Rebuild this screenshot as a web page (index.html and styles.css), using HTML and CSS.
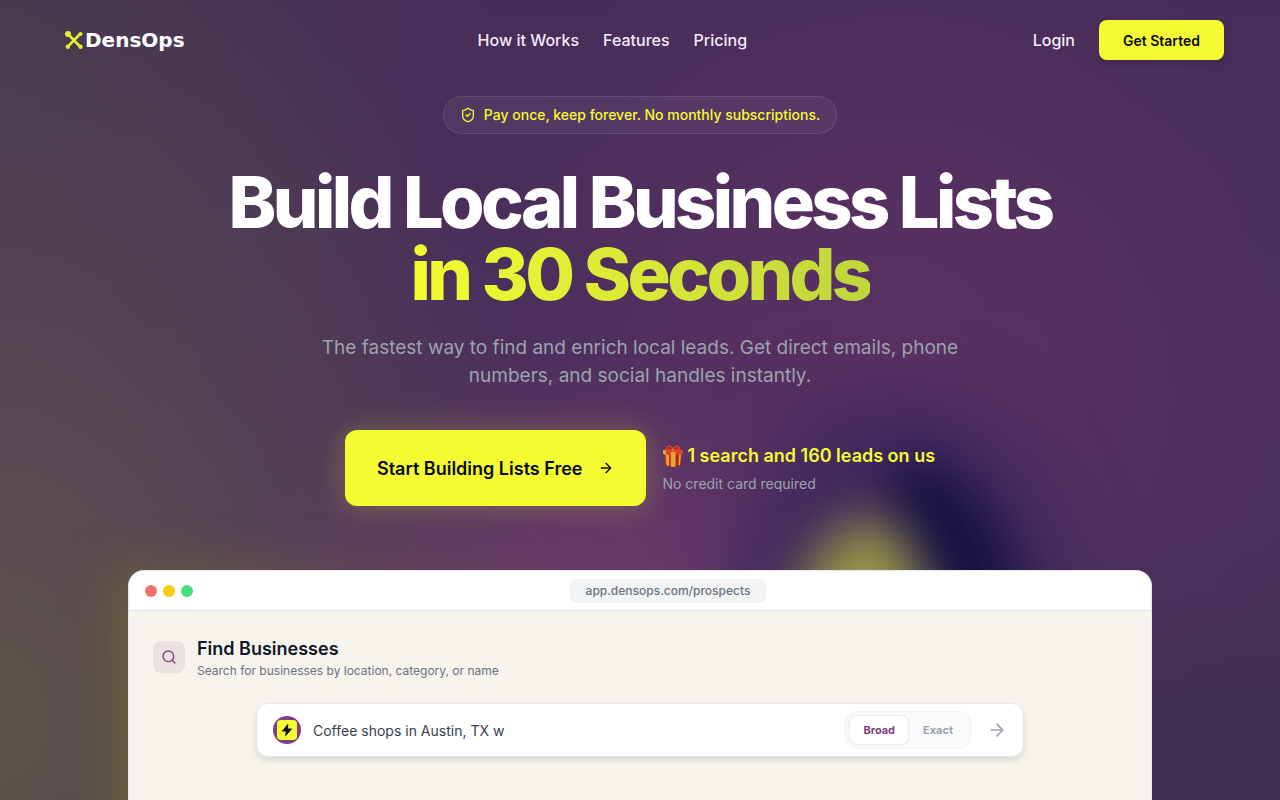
FILE: index.html
```html
<!DOCTYPE html>
<html lang="en">
<head>
    <meta charset="UTF-8">
    <meta name="viewport" content="width=device-width, initial-scale=1.0">
    <title>DensOps - Build Local Business Lists</title>
    <link rel="stylesheet" href="styles.css">
</head>
<body>
    <div class="backdrop">
        <div class="glow glow-edge"></div>
        <div class="glow glow-haze"></div>
        <div class="glow glow-navy"></div>
        <div class="glow glow-yellow"></div>
    </div>

    <header class="navbar">
        <a class="logo" href="#">
            <svg width="20" height="20" viewBox="0 0 20 20" fill="#e3f032" stroke="#e3f032">
                <path d="M4 4 16 16.500M16 4 4 16.500" stroke-width="2.600" fill="none"/>
                <circle cx="4" cy="4" r="3" stroke="none"/>
                <circle cx="16.500" cy="4" r="2" stroke="none"/>
                <circle cx="3.800" cy="16.800" r="2.200" stroke="none"/>
                <circle cx="16.500" cy="16.800" r="2.200" stroke="none"/>
            </svg>
            <span>DensOps</span>
        </a>
        <nav class="nav-links">
            <a href="#how">How it Works</a>
            <a href="#features">Features</a>
            <a href="#pricing">Pricing</a>
        </nav>
        <div class="nav-actions">
            <a href="#login">Login</a>
            <button class="btn-start" type="button">Get Started</button>
        </div>
    </header>

    <main>
        <section class="hero">
            <div class="pill">
                <svg width="16" height="16" viewBox="0 0 24 24" fill="none" stroke="currentColor" stroke-width="2" stroke-linecap="round" stroke-linejoin="round">
                    <path d="M20 13c0 5-3.500 7.500-7.660 8.950a1 1 0 0 1-.67-.01C7.500 20.500 4 18 4 13V6a1 1 0 0 1 1-1c2 0 4.500-1.200 6.240-2.720a1.170 1.170 0 0 1 1.520 0C14.510 3.810 17 5 19 5a1 1 0 0 1 1 1z"/>
                    <path d="m9 12 2 2 4-4"/>
                </svg>
                <span>Pay once, keep forever. No monthly subscriptions.</span>
            </div>

            <h1>Build Local Business Lists<br><span class="accent">in 30 Seconds</span></h1>

            <p class="lead">The fastest way to find and enrich local leads. Get direct emails, phone numbers, and social handles instantly.</p>

            <div class="cta">
                <button class="btn-cta" type="button">
                    <span>Start Building Lists Free</span>
                    <svg width="16" height="16" viewBox="0 0 24 24" fill="none" stroke="currentColor" stroke-width="2" stroke-linecap="round" stroke-linejoin="round">
                        <path d="M5 12h14M12 5l7 7-7 7"/>
                    </svg>
                </button>
                <div class="offer">
                    <p class="offer-title">
                        <svg width="22" height="22" viewBox="0 0 22 22">
                            <path d="M2 7h18l-1.500 13L11 22l-7.500-2z" fill="#c8391f"/>
                            <path d="M11 8h9l-1.500 12L11 22z" fill="#a92a18"/>
                            <path d="M1 5 11 2.500 21 5v4l-10 2L1 9z" fill="#d9442a"/>
                            <path d="M1 5.500 4 4.700v5l-3-.7zM4 9.500 7 10v11l-2.500-.7zM9 7h4.500v14.500L11 22l-2-.5zM17 9.800l2-.4-1 10.700-1.500.4z" fill="#e7a63a"/>
                            <path d="M11 5C7 6 4 4 5 2s5-1 6 3zM11 5c4 1 7-1 6-3s-5-1-6 3z" fill="#b9261c" stroke="#ef5b3c"/>
                            <circle cx="11" cy="5" r="1.500" fill="#f0633f"/>
                        </svg>
                        <span>1 search and 160 leads on us</span>
                    </p>
                    <p class="offer-note">No credit card required</p>
                </div>
            </div>
        </section>

        <section class="browser">
            <div class="browser-bar">
                <div class="dots">
                    <span class="dot red"></span>
                    <span class="dot yellow"></span>
                    <span class="dot green"></span>
                </div>
                <div class="address"><span>app.densops.com/prospects</span></div>
            </div>
            <div class="browser-body">
                <div class="panel-head">
                    <div class="panel-icon">
                        <svg width="16" height="16" viewBox="0 0 24 24" fill="none" stroke="currentColor" stroke-width="2" stroke-linecap="round">
                            <circle cx="11" cy="11" r="8"/>
                            <path d="m21 21-4.300-4.300"/>
                        </svg>
                    </div>
                    <div>
                        <h2>Find Businesses</h2>
                        <p>Search for businesses by location, category, or name</p>
                    </div>
                </div>
                <form class="search">
                    <div class="bolt">
                        <div class="bolt-inner">
                            <svg width="12" height="12" viewBox="0 0 24 24" fill="#111111">
                                <path d="M13.500 1 3 14h7.500L9.500 23 21 10h-8z" stroke="#111111" stroke-width="2" stroke-linejoin="round"/>
                            </svg>
                        </div>
                    </div>
                    <input type="text" aria-label="Search businesses" value="Coffee shops in Austin, TX w">
                    <div class="toggle">
                        <button class="active" type="button">Broad</button>
                        <button type="button">Exact</button>
                    </div>
                    <button class="go" type="submit" aria-label="Search">
                        <svg width="20" height="20" viewBox="0 0 24 24" fill="none" stroke="currentColor" stroke-width="2" stroke-linecap="round" stroke-linejoin="round">
                            <path d="M5 12h14M12 5l7 7-7 7"/>
                        </svg>
                    </button>
                </form>
            </div>
        </section>
    </main>
</body>
</html>
```
FILE: styles.css
```css
*{
    margin: 0;
    padding: 0;
    box-sizing: border-box;
}

body{
    display: flex;
    flex-direction: column;
    min-height: 100vh;
    font-family: Inter, "Liberation Sans", sans-serif;
    font-size: 16px;
    line-height: 24px;
    color: white;
    background: #472d57;
}

a{
    color: inherit;
    text-decoration: none;
}

button,input{
    font-family: inherit;
    border: none;
    background: none;
}

button{
    cursor: pointer;
}

svg{
    display: block;
    flex-shrink: 0;
}

/* background glows */
.backdrop{
    position: absolute;
    inset: 0;
    z-index: -1;
    overflow: hidden;
    background:
        radial-gradient(ellipse 28% 32% at 46% 76%, rgba(122, 66, 114, 0.7), transparent),
        radial-gradient(ellipse 36% 55% at 70% 44%, rgba(98, 50, 103, 0.7), transparent),
        radial-gradient(ellipse 45% 110% at 0% 90%, rgba(98, 88, 76, 0.9), transparent),
        radial-gradient(ellipse 38% 60% at 0% 0%, rgba(66, 54, 78, 0.8), transparent),
        linear-gradient(180deg, #482d59 0%, #4b2f5b 65%, #3d3050 100%);
}

.glow{
    position: absolute;
}

.glow-edge{
    left: 9%;
    top: 71%;
    width: 40%;
    height: 50%;
    background: linear-gradient(90deg, rgba(114, 108, 50, 0.7), rgba(122, 90, 70, 0.4) 40%, transparent);
    filter: blur(24px);
}

.glow-haze{
    left: 57%;
    top: 50%;
    width: 26%;
    height: 50%;
    border-radius: 50%;
    background: rgba(48, 34, 88, 0.6);
    filter: blur(40px);
}

.glow-navy{
    left: 71%;
    top: 56%;
    width: 7%;
    height: 24%;
    border-radius: 50%;
    background: rgba(18, 16, 64, 0.9);
    filter: blur(24px);
    transform: rotate(-32deg);
}

.glow-yellow{
    left: 61%;
    top: 65%;
    width: 12%;
    height: 24%;
    border-radius: 60% 40% 0 0 / 100% 100% 0 0;
    background: rgba(158, 160, 68, 0.95);
    filter: blur(26px);
}

/* navbar */
.navbar{
    display: flex;
    justify-content: space-between;
    align-items: center;
    height: 80px;
    padding: 0 56px;
    font-weight: 500;
    color: #f5e9fb;
}

.logo{
    display: flex;
    align-items: center;
    width: 136px;
    padding-left: 8px;
    gap: 1px;
    font-family: "DejaVu Sans", sans-serif;
    font-size: 20px;
    font-weight: bold;
    color: white;
}

.nav-links,.nav-actions{
    display: flex;
    align-items: center;
    gap: 24px;
}

.btn-start{
    height: 40px;
    padding: 0 24px;
    border-radius: 8px;
    background: #f4fb32;
    color: #0b0b14;
    font-size: 14px;
    font-weight: 600;
    box-shadow: 0 4px 6px rgba(0, 0, 0, 0.1);
}

main{
    display: flex;
    flex: 1;
    flex-direction: column;
}

/* hero */
.hero{
    display: flex;
    flex-direction: column;
    align-items: center;
    padding: 16px 24px 64px;
    text-align: center;
}

.pill{
    display: flex;
    align-items: center;
    gap: 8px;
    padding: 8px 16px;
    margin-bottom: 32px;
    border: 1px solid rgba(255, 255, 255, 0.1);
    border-radius: 20px;
    background: rgba(255, 255, 255, 0.05);
    color: #f4fb32;
    font-size: 14px;
    font-weight: 500;
    line-height: 20px;
}

h1{
    font-size: 72px;
    font-weight: 800;
    line-height: 72px;
    letter-spacing: -0.05em;
    margin-bottom: 24px;
}

.accent{
    background: linear-gradient(90deg, #f4fb32, #bfd63c);
    -webkit-background-clip: text;
    background-clip: text;
    color: transparent;
}

.lead{
    max-width: 640px;
    margin-bottom: 40px;
    font-size: 19px;
    line-height: 28px;
    color: #9ca3af;
}

.cta{
    display: flex;
    align-items: center;
    gap: 16px;
}

.btn-cta{
    display: flex;
    align-items: center;
    gap: 16px;
    height: 76px;
    padding: 0 32px;
    border-radius: 12px;
    background: #f4fb32;
    color: #0b0b14;
    font-size: 18px;
    font-weight: 600;
    box-shadow: 0 0 30px rgba(244, 251, 50, 0.25);
}

.offer{
    text-align: left;
}

.offer-title{
    display: flex;
    align-items: center;
    gap: 3px;
    margin-bottom: 4px;
    font-size: 18px;
    font-weight: 600;
    line-height: 28px;
    color: #f4fb32;
}

.offer-note{
    font-size: 14px;
    line-height: 20px;
    color: #9ca3af;
}

/* browser window */
.browser{
    flex: 1;
    width: 80%;
    max-width: 1024px;
    margin: 0 auto;
    border: 1px solid #e5e7eb;
    border-bottom: none;
    border-radius: 16px 16px 0 0;
    overflow: hidden;
    background: #f7f3ed;
    color: #111827;
}

.browser-bar{
    display: flex;
    align-items: center;
    height: 40px;
    padding: 0 16px;
    border-bottom: 1px solid #e5e7eb;
    background: white;
}

.dots{
    display: flex;
    gap: 6px;
}

.dot{
    width: 12px;
    height: 12px;
    border-radius: 50%;
}

.red{
    background: #f87171;
}

.yellow{
    background: #facc15;
}

.green{
    background: #4ade80;
}

.address{
    display: flex;
    flex: 1;
    justify-content: center;
    padding-left: 8px;
}

.address span{
    padding: 4px 16px;
    border-radius: 6px;
    background: #f3f4f6;
    color: #6b7280;
    font-size: 12px;
    font-weight: 500;
    line-height: 16px;
}

.browser-body{
    padding: 24px;
}

.panel-head{
    display: flex;
    align-items: center;
    gap: 12px;
    margin-bottom: 24px;
}

.panel-icon{
    display: flex;
    justify-content: center;
    align-items: center;
    width: 32px;
    height: 32px;
    border-radius: 8px;
    background: #eae1e1;
    color: #7f3f7f;
}

.panel-head h2{
    font-size: 18px;
    font-weight: 600;
    line-height: 28px;
}

.panel-head p{
    font-size: 12px;
    line-height: 16px;
    color: #6b7280;
}

.search{
    display: flex;
    align-items: center;
    max-width: 768px;
    height: 54px;
    margin: 0 auto;
    padding: 0 16px;
    border: 1px solid #e5e7eb;
    border-radius: 12px;
    background: white;
    box-shadow: 0 4px 6px rgba(0, 0, 0, 0.1);
}

.bolt{
    display: flex;
    justify-content: center;
    align-items: center;
    width: 28px;
    height: 28px;
    margin-right: 12px;
    border-radius: 50%;
    background: #7f3f8c;
}

.bolt-inner{
    display: flex;
    justify-content: center;
    align-items: center;
    width: 20px;
    height: 20px;
    border-radius: 4px;
    background: #f4fb32;
}

.search input{
    flex: 1;
    min-width: 0;
    height: 32px;
    font-size: 14px;
    color: #374151;
    outline: none;
}

.toggle{
    display: flex;
    padding: 3px;
    border: 1px solid #f3f4f6;
    border-radius: 12px;
    background: #f9fafb;
}

.toggle button{
    height: 30px;
    padding: 0 13px;
    border: 1px solid transparent;
    border-radius: 8px;
    color: #9ca3af;
    font-size: 11px;
    font-weight: 700;
}

.toggle .active{
    border-color: #f3e8f3;
    background: white;
    color: #7f3f7f;
    box-shadow: 0 1px 2px rgba(0, 0, 0, 0.05);
}

.go{
    margin-left: 16px;
    color: #9ca3af;
}
```
